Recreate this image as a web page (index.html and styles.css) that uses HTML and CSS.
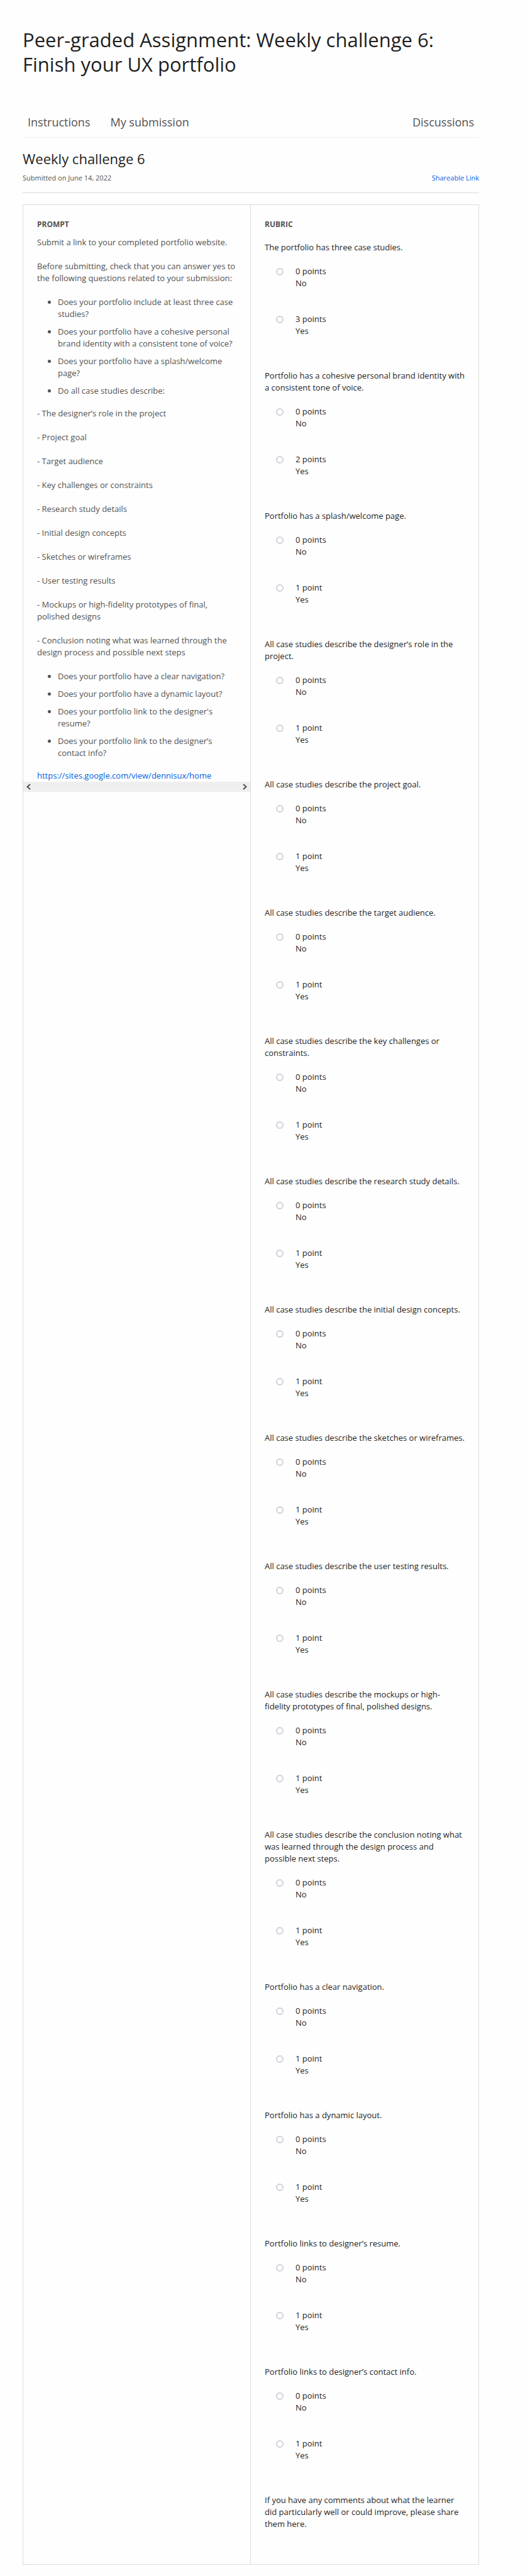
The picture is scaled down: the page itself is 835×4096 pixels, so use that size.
FILE: index.html
```html
<!DOCTYPE html>
<html lang="en">
<head>
<meta charset="utf-8">
<title>Peer-graded Assignment: Weekly challenge 6</title>
<link rel="stylesheet" href="styles.css">
</head>
<body>
<main class="page">
  <h1 class="title">Peer-graded Assignment: Weekly challenge 6: Finish your UX portfolio</h1>
  <nav class="tabs">
    <a class="tab" href="#">Instructions</a>
    <a class="tab" href="#">My submission</a>
    <a class="tab tab-end" href="#">Discussions</a>
  </nav>
  <header class="submission">
    <h2 class="submission-title">Weekly challenge 6</h2>
    <div class="submission-meta">
      <span>Submitted on June 14, 2022</span>
      <a class="link" href="#">Shareable Link</a>
    </div>
  </header>
  <div class="panel">
    <section class="prompt">
      <div class="prompt-body">
        <h3 class="label">PROMPT</h3>
        <p>Submit a link to your completed portfolio website.</p>
        <p>Before submitting, check that you can answer yes to the following questions related to your submission:</p>
        <ul>
          <li>Does your portfolio include at least three case studies?</li>
          <li>Does your portfolio have a cohesive personal brand identity with a consistent tone of voice?</li>
          <li>Does your portfolio have a splash/welcome page?</li>
          <li>Do all case studies describe:</li>
        </ul>
        <p>- The designer’s role in the project</p>
        <p>- Project goal</p>
        <p>- Target audience</p>
        <p>- Key challenges or constraints</p>
        <p>- Research study details</p>
        <p>- Initial design concepts</p>
        <p>- Sketches or wireframes</p>
        <p>- User testing results</p>
        <p>- Mockups or high-fidelity prototypes of final, polished designs</p>
        <p>- Conclusion noting what was learned through the design process and possible next steps</p>
        <ul>
          <li>Does your portfolio have a clear navigation?</li>
          <li>Does your portfolio have a dynamic layout?</li>
          <li>Does your portfolio link to the designer's resume?</li>
          <li>Does your portfolio link to the designer’s contact info?</li>
        </ul>
        <a class="link" href="#">https://sites.google.com/view/dennisux/home</a>
      </div>
      <div class="scroller">
        <button class="scroll-button" aria-label="Scroll left"><svg width="8" height="10" viewBox="0 0 8 10"><path d="M7 1 2.500 5 7 9" fill="none" stroke="#505050" stroke-width="2"/></svg></button>
        <button class="scroll-button" aria-label="Scroll right"><svg width="8" height="10" viewBox="0 0 8 10"><path d="M1 1 5.500 5 1 9" fill="none" stroke="#505050" stroke-width="2"/></svg></button>
      </div>
    </section>
    <section class="rubric">
      <h3 class="label">RUBRIC</h3>
      <fieldset class="question"><legend>The portfolio has three case studies.</legend>
        <label class="option"><input type="radio" name="q1"><span>0 points<br>No</span></label>
        <label class="option"><input type="radio" name="q1"><span>3 points<br>Yes</span></label>
      </fieldset>
      <fieldset class="question"><legend>Portfolio has a cohesive personal brand identity with a consistent tone of voice.</legend>
        <label class="option"><input type="radio" name="q2"><span>0 points<br>No</span></label>
        <label class="option"><input type="radio" name="q2"><span>2 points<br>Yes</span></label>
      </fieldset>
      <fieldset class="question"><legend>Portfolio has a splash/welcome page.</legend>
        <label class="option"><input type="radio" name="q3"><span>0 points<br>No</span></label>
        <label class="option"><input type="radio" name="q3"><span>1 point<br>Yes</span></label>
      </fieldset>
      <fieldset class="question"><legend>All case studies describe the designer’s role in the project.</legend>
        <label class="option"><input type="radio" name="q4"><span>0 points<br>No</span></label>
        <label class="option"><input type="radio" name="q4"><span>1 point<br>Yes</span></label>
      </fieldset>
      <fieldset class="question"><legend>All case studies describe the project goal.</legend>
        <label class="option"><input type="radio" name="q5"><span>0 points<br>No</span></label>
        <label class="option"><input type="radio" name="q5"><span>1 point<br>Yes</span></label>
      </fieldset>
      <fieldset class="question"><legend>All case studies describe the target audience.</legend>
        <label class="option"><input type="radio" name="q6"><span>0 points<br>No</span></label>
        <label class="option"><input type="radio" name="q6"><span>1 point<br>Yes</span></label>
      </fieldset>
      <fieldset class="question"><legend>All case studies describe the key challenges or constraints.</legend>
        <label class="option"><input type="radio" name="q7"><span>0 points<br>No</span></label>
        <label class="option"><input type="radio" name="q7"><span>1 point<br>Yes</span></label>
      </fieldset>
      <fieldset class="question"><legend>All case studies describe the research study details.</legend>
        <label class="option"><input type="radio" name="q8"><span>0 points<br>No</span></label>
        <label class="option"><input type="radio" name="q8"><span>1 point<br>Yes</span></label>
      </fieldset>
      <fieldset class="question"><legend>All case studies describe the initial design concepts.</legend>
        <label class="option"><input type="radio" name="q9"><span>0 points<br>No</span></label>
        <label class="option"><input type="radio" name="q9"><span>1 point<br>Yes</span></label>
      </fieldset>
      <fieldset class="question"><legend>All case studies describe the sketches or wireframes.</legend>
        <label class="option"><input type="radio" name="q10"><span>0 points<br>No</span></label>
        <label class="option"><input type="radio" name="q10"><span>1 point<br>Yes</span></label>
      </fieldset>
      <fieldset class="question"><legend>All case studies describe the user testing results.</legend>
        <label class="option"><input type="radio" name="q11"><span>0 points<br>No</span></label>
        <label class="option"><input type="radio" name="q11"><span>1 point<br>Yes</span></label>
      </fieldset>
      <fieldset class="question"><legend>All case studies describe the mockups or high-<br>fidelity prototypes of final, polished designs.</legend>
        <label class="option"><input type="radio" name="q12"><span>0 points<br>No</span></label>
        <label class="option"><input type="radio" name="q12"><span>1 point<br>Yes</span></label>
      </fieldset>
      <fieldset class="question"><legend>All case studies describe the conclusion noting what was learned through the design process and<br>possible next steps.</legend>
        <label class="option"><input type="radio" name="q13"><span>0 points<br>No</span></label>
        <label class="option"><input type="radio" name="q13"><span>1 point<br>Yes</span></label>
      </fieldset>
      <fieldset class="question"><legend>Portfolio has a clear navigation.</legend>
        <label class="option"><input type="radio" name="q14"><span>0 points<br>No</span></label>
        <label class="option"><input type="radio" name="q14"><span>1 point<br>Yes</span></label>
      </fieldset>
      <fieldset class="question"><legend>Portfolio has a dynamic layout.</legend>
        <label class="option"><input type="radio" name="q15"><span>0 points<br>No</span></label>
        <label class="option"><input type="radio" name="q15"><span>1 point<br>Yes</span></label>
      </fieldset>
      <fieldset class="question"><legend>Portfolio links to designer’s resume.</legend>
        <label class="option"><input type="radio" name="q16"><span>0 points<br>No</span></label>
        <label class="option"><input type="radio" name="q16"><span>1 point<br>Yes</span></label>
      </fieldset>
      <fieldset class="question"><legend>Portfolio links to designer’s contact info.</legend>
        <label class="option"><input type="radio" name="q17"><span>0 points<br>No</span></label>
        <label class="option"><input type="radio" name="q17"><span>1 point<br>Yes</span></label>
      </fieldset>
      <p class="comments">If you have any comments about what the learner did particularly well or could improve, please share them here.</p>
    </section>
  </div>
</main>
</body>
</html>
```
FILE: styles.css
```css
* { box-sizing: border-box; }
body {
  margin: 0;
  background: #fefefe;
  color: #1f1f1f;
  font: 13px/19px "Open Sans", "Noto Sans", sans-serif;
}
h1, h2, h3, p, ul { margin: 0; font-weight: 400; }
.page { padding: 44px 73px 18px 36px; }
.title { font-size: 31px; line-height: 39px; }
.tabs {
  display: flex;
  gap: 32px;
  margin-top: 60px;
  padding: 0 8px 12px;
  border-bottom: 1px solid #f0f0f0;
}
.tab { color: #525252; font-size: 18px; line-height: 24px; text-decoration: none; }
.tab-end { margin-left: auto; }
.submission { padding: 19px 0 14px; border-bottom: 1px solid #dcdcdc; }
.submission-title { font-size: 22px; line-height: 28px; }
.submission-meta {
  display: flex;
  justify-content: space-between;
  margin-top: 7px;
  color: #525252;
  font-size: 11px;
}
.link { color: #0062e3; text-decoration: none; }
.panel {
  display: grid;
  grid-template-columns: 1fr 1fr;
  margin-top: 18px;
  border: 1px solid #dcdcdc;
}
.label { color: #525252; font-size: 12px; font-weight: 700; }
.prompt { border-right: 1px solid #dcdcdc; color: #525252; }
.prompt-body { padding: 21px 22px 0 22px; }
.prompt p { margin-bottom: 19px; }
.prompt .label { margin-bottom: 10px; }
.prompt ul { margin-bottom: 17px; padding-left: 33px; }
.prompt li + li { margin-top: 9px; }
.scroller {
  display: flex;
  justify-content: space-between;
  height: 16px;
  background: #efefef;
}
.scroll-button {
  display: grid;
  place-items: center;
  width: 16px;
  padding: 0;
  border: 0;
  background: none;
}
.rubric { padding: 21px 17px 54px 22px; }
.rubric .label { margin-bottom: 18px; }
.question { min-width: 0; margin: 0 0 52px; padding: 0; border: 0; }
.question legend { padding: 0; margin-bottom: 19px; }
.option { display: flex; gap: 19px; padding-left: 18px; }
.option + .option { margin-top: 38px; }
.option input {
  appearance: none;
  width: 12px;
  height: 12px;
  margin: 4px 0 0;
  border: 2px solid #d0d0d9;
  border-radius: 50%;
  background: #fff;
}
```
